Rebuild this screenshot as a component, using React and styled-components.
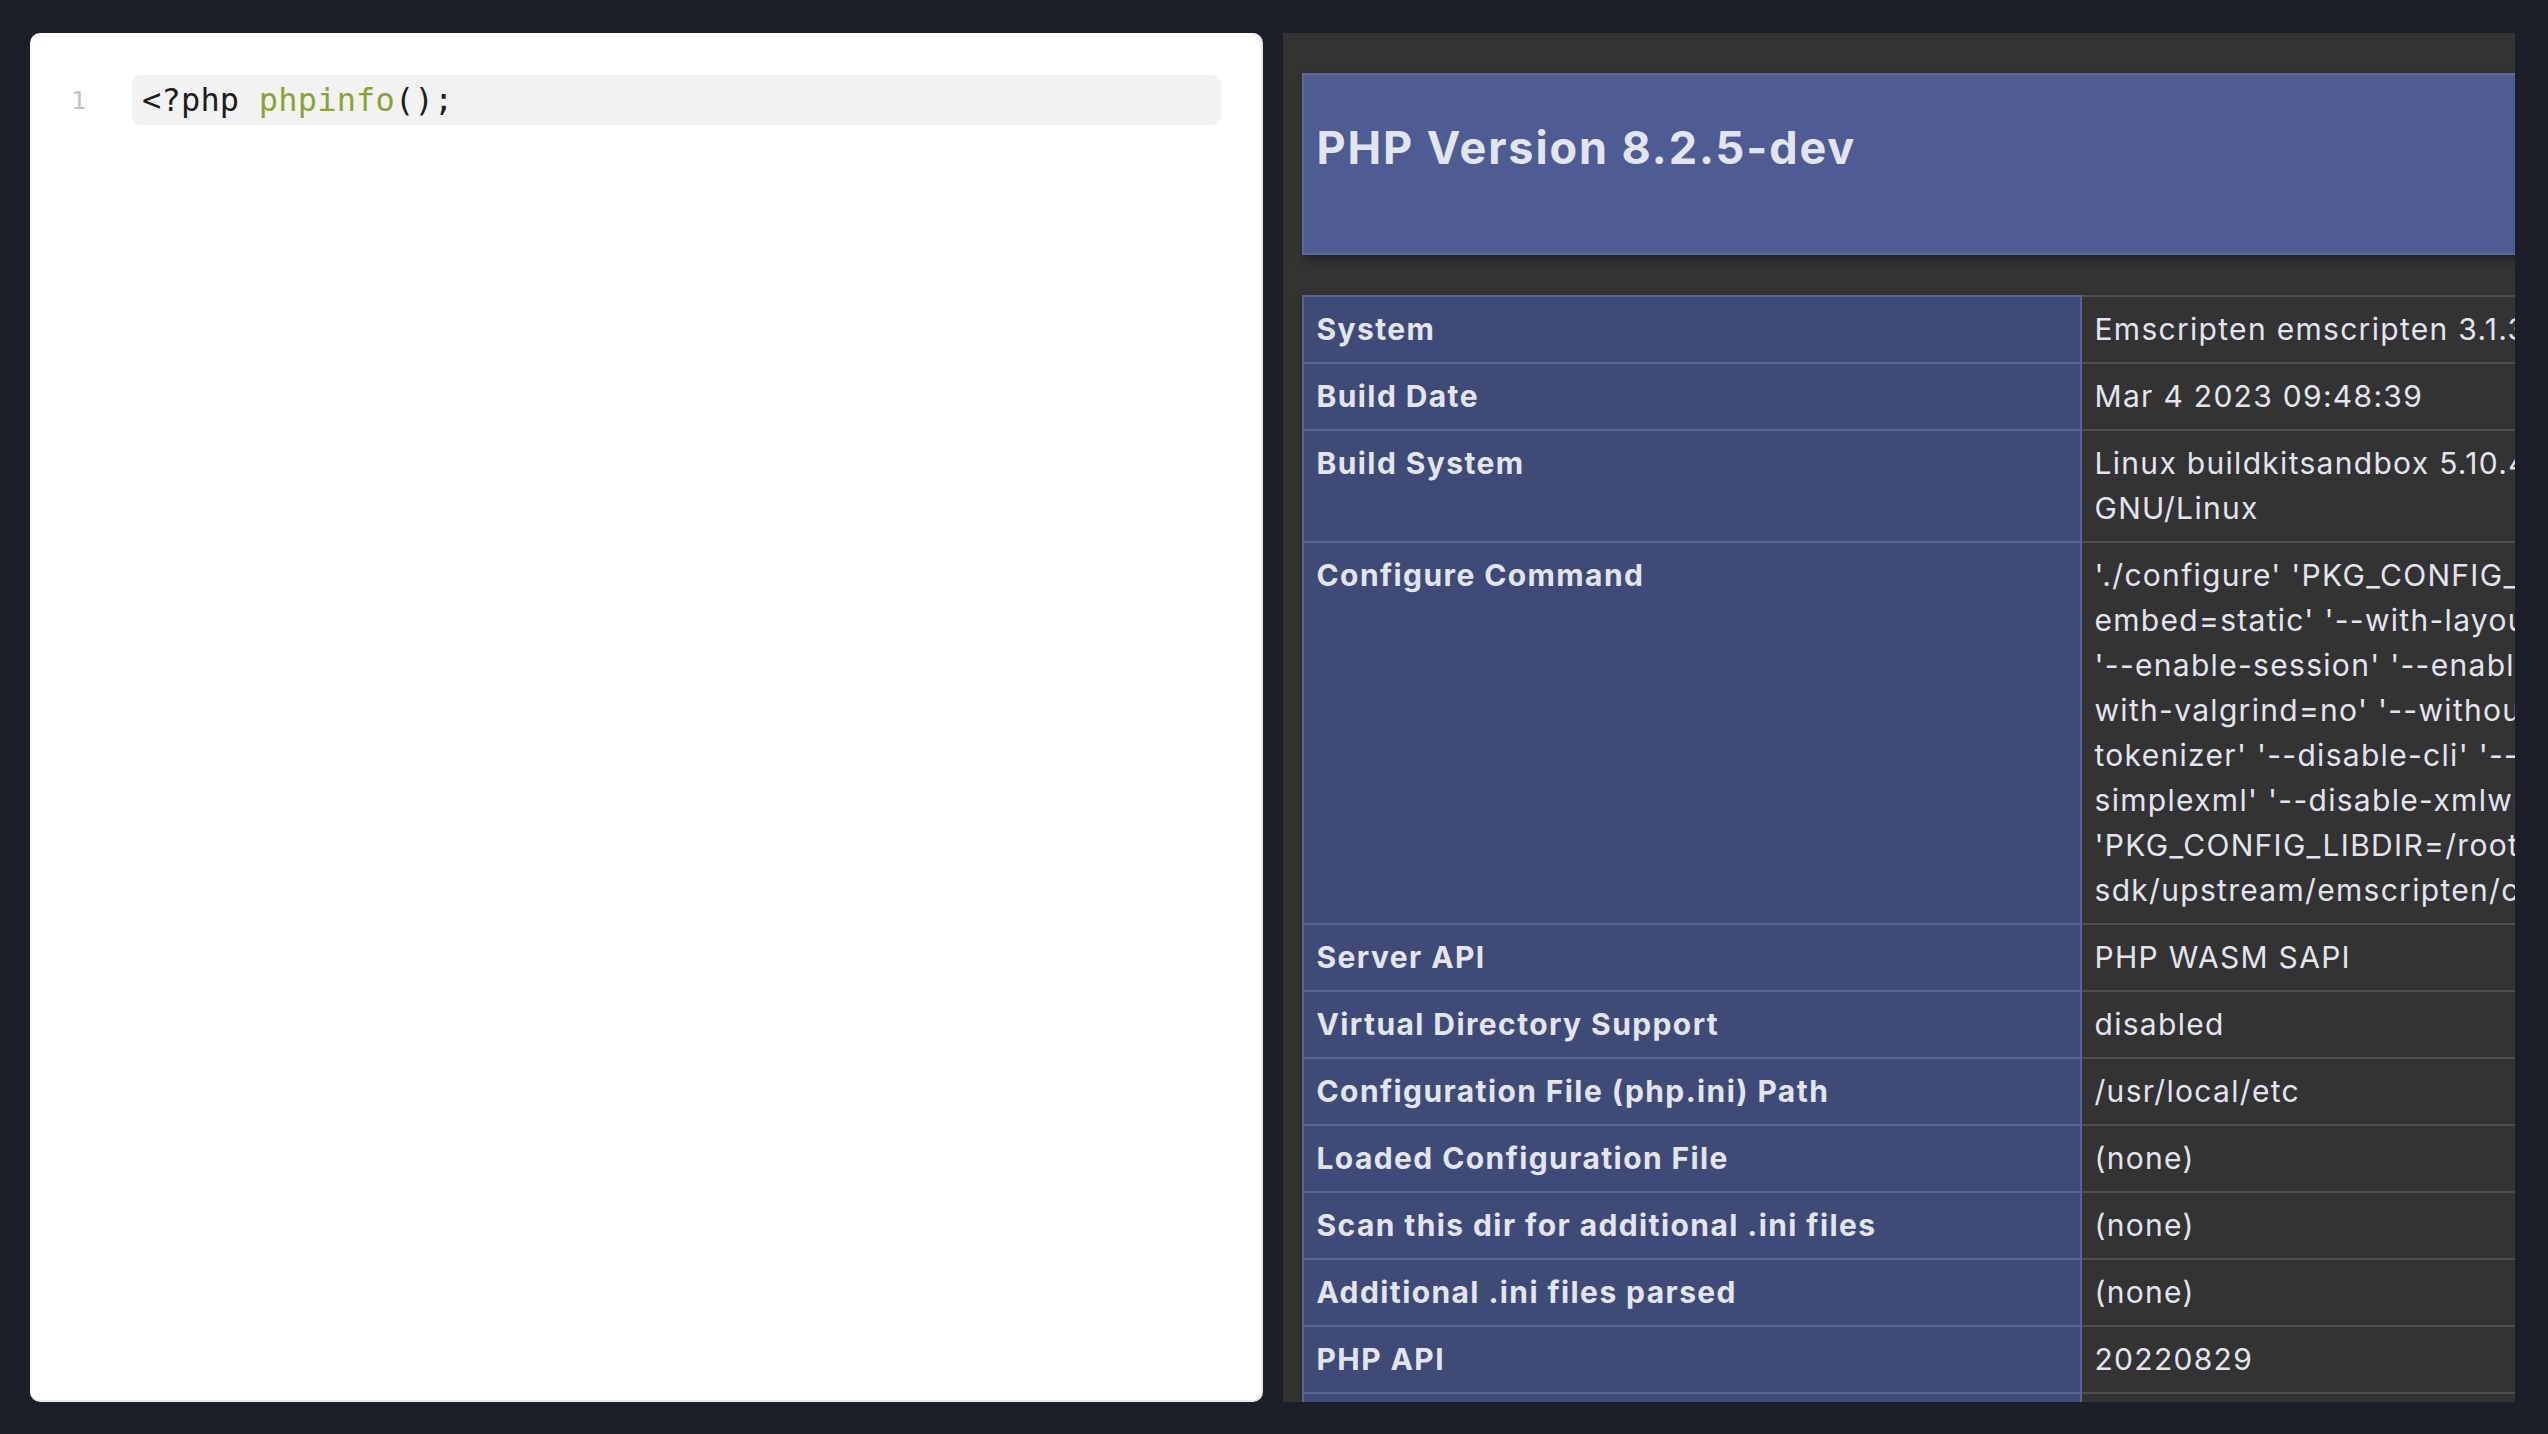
import React from "react";
import styled, { createGlobalStyle } from "styled-components";

const GlobalStyle = createGlobalStyle`
  html, body {
    margin: 0;
    padding: 0;
    background: #1c1f2a;
  }
  * {
    box-sizing: border-box;
  }
`;

const Workspace = styled.div`
  height: 100vh;
  padding: 33px 33px 32px 30px;
  display: grid;
  grid-template-columns: 1fr 1fr;
  gap: 20px;
  overflow: hidden;
`;

const EditorCard = styled.div`
  background: #ffffff;
  border-radius: 10px;
  border-right: 2px solid #e8e8e8;
  border-bottom: 2px solid #e8e8e8;
  padding: 42px 40px 0 0;
  overflow: hidden;
`;

const CodeRow = styled.div`
  display: flex;
  align-items: center;
  height: 50px;
`;

const Gutter = styled.div`
  width: 102px;
  flex-shrink: 0;
  padding-left: 41px;
  font-family: "DejaVu Sans Mono", monospace;
  font-size: 25px;
  color: #c2c2c2;
`;

const CodeLine = styled.div`
  flex: 1;
  height: 100%;
  background: #f2f2f2;
  border-radius: 9px;
  padding-left: 10px;
  display: flex;
  align-items: center;
  font-family: "DejaVu Sans Mono", monospace;
  font-size: 32px;
  letter-spacing: 0.2px;
  color: #1e1e1e;
  white-space: pre;
`;

const Token = styled.span`
  color: ${({ $kind }) => ($kind === "fn" ? "#8aa334" : "#1e1e1e")};
`;

const Preview = styled.div`
  background: #333333;
  overflow: hidden;
  padding: 40px 0 0 19px;
  color: #e2e4ef;
  font-family: Inter, "Liberation Sans", sans-serif;
`;

const HeaderBox = styled.div`
  width: 2335px;
  height: 182px;
  background: #4f5b93;
  border: 2px solid #5e6898;
  padding: 39px 13px 0;
  box-shadow: 2px 5px 8px rgba(0, 0, 0, 0.3);
  margin-bottom: 40px;
`;

const Title = styled.h1`
  margin: 0;
  font-size: 45px;
  line-height: 68px;
  font-weight: 700;
  letter-spacing: 1.9px;
  color: #e2e4ef;
`;

const InfoTable = styled.table`
  width: 2335px;
  border-collapse: collapse;
  box-shadow: 2px 5px 8px rgba(0, 0, 0, 0.3);
`;

const KeyCell = styled.td`
  width: 778px;
  background: #404a77;
  border: 2px solid #5a6492;
  padding: 10px 12px 10px 13px;
  font-size: 30px;
  line-height: 45px;
  font-weight: 700;
  letter-spacing: 1.4px;
  vertical-align: baseline;
`;

const ValueCell = styled.td`
  background: #333333;
  border: 2px solid #4e4e4e;
  border-left-color: #5a6492;
  padding: 10px 12px 10px 13px;
  font-size: 30px;
  line-height: 45px;
  font-weight: 400;
  letter-spacing: 1.3px;
  vertical-align: baseline;
`;

const Line = styled.span`
  display: block;
  white-space: nowrap;
`;

const rows = [
  ["System", ["Emscripten emscripten 3.1.31-git 1 wasm32"]],
  ["Build Date", ["Mar 4 2023 09:48:39"]],
  [
    "Build System",
    [
      "Linux buildkitsandbox 5.10.47-linuxkit #1 SMP Sat Jul 3 21:51:47 UTC 2021 x86_64",
      "GNU/Linux",
    ],
  ],
  [
    "Configure Command",
    [
      "'./configure' 'PKG_CONFIG_PATH=/root/lib/lib/pkgconfig' '--enable-",
      "embed=static' '--with-layout=GNU' '--disable-cgi' '--disable-",
      "'--enable-session' '--enable-filter' '--enable-calendar' '--disable-rpath' '--",
      "with-valgrind=no' '--without-pear' '--without-pcre-jit' '--enable-",
      "tokenizer' '--disable-cli' '--disable-phpdbg' '--disable-",
      "simplexml' '--disable-xmlwriter' '--disable-dom' '--disable-xml'",
      "'PKG_CONFIG_LIBDIR=/root/lib/lib/pkgconfig:/root/emsdk/",
      "sdk/upstream/emscripten/cache/sysroot/local/lib/pkgconfig'",
    ],
  ],
  ["Server API", ["PHP WASM SAPI"]],
  ["Virtual Directory Support", ["disabled"]],
  ["Configuration File (php.ini) Path", ["/usr/local/etc"]],
  ["Loaded Configuration File", ["(none)"]],
  ["Scan this dir for additional .ini files", ["(none)"]],
  ["Additional .ini files parsed", ["(none)"]],
  ["PHP API", ["20220829"]],
  ["PHP Extension", ["20220829"]],
  ["Zend Extension", ["420220829"]],
];

const App = () => {
  return (
    <>
      <GlobalStyle />
      <Workspace>
        <EditorCard>
          <CodeRow>
            <Gutter>1</Gutter>
            <CodeLine>
              <Token>{"<?php "}</Token>
              <Token $kind="fn">phpinfo</Token>
              <Token>();</Token>
            </CodeLine>
          </CodeRow>
        </EditorCard>

        <Preview>
          <HeaderBox>
            <Title>PHP Version 8.2.5-dev</Title>
          </HeaderBox>
          <InfoTable>
            <tbody>
              {rows.map(([key, lines]) => (
                <tr key={key}>
                  <KeyCell>{key}</KeyCell>
                  <ValueCell>
                    {lines.map((line, i) => (
                      <Line key={i}>{line}</Line>
                    ))}
                  </ValueCell>
                </tr>
              ))}
            </tbody>
          </InfoTable>
        </Preview>
      </Workspace>
    </>
  );
};

export default App;
